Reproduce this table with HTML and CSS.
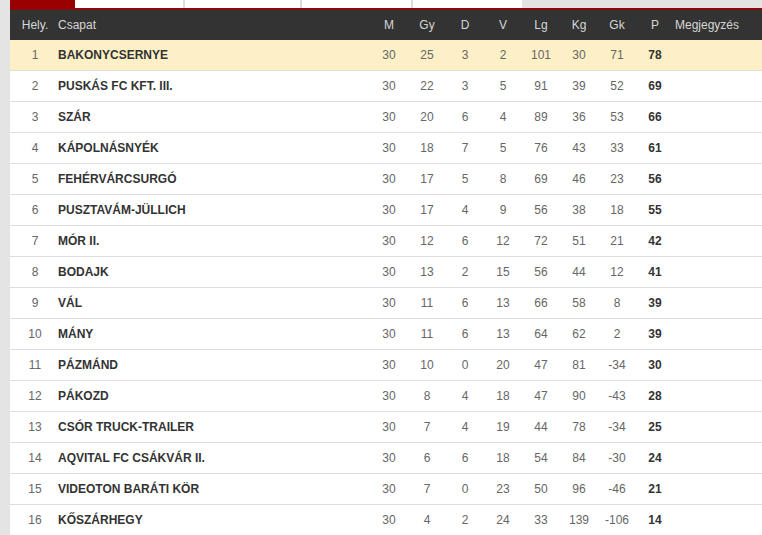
FILE: index.html
```html
<!DOCTYPE html>
<html lang="hu">
<head>
<meta charset="utf-8">
<title>Tabella</title>
<link rel="stylesheet" href="styles.css">
</head>
<body>
<div class="page">
  <div class="tabs">
    <div class="tab tab-active"></div>
    <div class="tab tab-w1"></div>
    <div class="tab tab-w2"></div>
    <div class="tab tab-w3"></div>
    <div class="tab tab-w4"></div>
    <div class="tab-rest"></div>
  </div>
  <table class="standings">
    <colgroup>
      <col class="c-pos"><col class="c-team">
      <col class="c-num"><col class="c-num"><col class="c-num"><col class="c-num">
      <col class="c-num"><col class="c-num"><col class="c-num"><col class="c-num">
      <col class="c-note">
    </colgroup>
    <thead>
      <tr>
        <th class="pos">Hely.</th><th class="team">Csapat</th>
        <th>M</th><th>Gy</th><th>D</th><th>V</th><th>Lg</th><th>Kg</th><th>Gk</th><th>P</th>
        <th class="note">Megjegyzés</th>
      </tr>
    </thead>
    <tbody>
      <tr class="leader"><td class="pos">1</td><td class="team">BAKONYCSERNYE</td><td>30</td><td>25</td><td>3</td><td>2</td><td>101</td><td>30</td><td>71</td><td class="pts">78</td><td class="note"></td></tr>
      <tr><td class="pos">2</td><td class="team">PUSKÁS FC KFT. III.</td><td>30</td><td>22</td><td>3</td><td>5</td><td>91</td><td>39</td><td>52</td><td class="pts">69</td><td class="note"></td></tr>
      <tr><td class="pos">3</td><td class="team">SZÁR</td><td>30</td><td>20</td><td>6</td><td>4</td><td>89</td><td>36</td><td>53</td><td class="pts">66</td><td class="note"></td></tr>
      <tr><td class="pos">4</td><td class="team">KÁPOLNÁSNYÉK</td><td>30</td><td>18</td><td>7</td><td>5</td><td>76</td><td>43</td><td>33</td><td class="pts">61</td><td class="note"></td></tr>
      <tr><td class="pos">5</td><td class="team">FEHÉRVÁRCSURGÓ</td><td>30</td><td>17</td><td>5</td><td>8</td><td>69</td><td>46</td><td>23</td><td class="pts">56</td><td class="note"></td></tr>
      <tr><td class="pos">6</td><td class="team">PUSZTAVÁM-JÜLLICH</td><td>30</td><td>17</td><td>4</td><td>9</td><td>56</td><td>38</td><td>18</td><td class="pts">55</td><td class="note"></td></tr>
      <tr><td class="pos">7</td><td class="team">MÓR II.</td><td>30</td><td>12</td><td>6</td><td>12</td><td>72</td><td>51</td><td>21</td><td class="pts">42</td><td class="note"></td></tr>
      <tr><td class="pos">8</td><td class="team">BODAJK</td><td>30</td><td>13</td><td>2</td><td>15</td><td>56</td><td>44</td><td>12</td><td class="pts">41</td><td class="note"></td></tr>
      <tr><td class="pos">9</td><td class="team">VÁL</td><td>30</td><td>11</td><td>6</td><td>13</td><td>66</td><td>58</td><td>8</td><td class="pts">39</td><td class="note"></td></tr>
      <tr><td class="pos">10</td><td class="team">MÁNY</td><td>30</td><td>11</td><td>6</td><td>13</td><td>64</td><td>62</td><td>2</td><td class="pts">39</td><td class="note"></td></tr>
      <tr><td class="pos">11</td><td class="team">PÁZMÁND</td><td>30</td><td>10</td><td>0</td><td>20</td><td>47</td><td>81</td><td>-34</td><td class="pts">30</td><td class="note"></td></tr>
      <tr><td class="pos">12</td><td class="team">PÁKOZD</td><td>30</td><td>8</td><td>4</td><td>18</td><td>47</td><td>90</td><td>-43</td><td class="pts">28</td><td class="note"></td></tr>
      <tr><td class="pos">13</td><td class="team">CSÓR TRUCK-TRAILER</td><td>30</td><td>7</td><td>4</td><td>19</td><td>44</td><td>78</td><td>-34</td><td class="pts">25</td><td class="note"></td></tr>
      <tr><td class="pos">14</td><td class="team">AQVITAL FC CSÁKVÁR II.</td><td>30</td><td>6</td><td>6</td><td>18</td><td>54</td><td>84</td><td>-30</td><td class="pts">24</td><td class="note"></td></tr>
      <tr><td class="pos">15</td><td class="team">VIDEOTON BARÁTI KÖR</td><td>30</td><td>7</td><td>0</td><td>23</td><td>50</td><td>96</td><td>-46</td><td class="pts">21</td><td class="note"></td></tr>
      <tr><td class="pos">16</td><td class="team">KŐSZÁRHEGY</td><td>30</td><td>4</td><td>2</td><td>24</td><td>33</td><td>139</td><td>-106</td><td class="pts">14</td><td class="note"></td></tr>
    </tbody>
  </table>
</div>
</body>
</html>
```

FILE: styles.css
```css
html, body {
  margin: 0;
  padding: 0;
}

body {
  background: #e4e4e4;
  font-family: "Liberation Sans", Arial, sans-serif;
  font-size: 12px;
  width: 762px;
  height: 535px;
  overflow: hidden;
}

.page {
  margin-left: 10px;
  width: 752px;
  background: #ffffff;
  min-height: 535px;
}

.tabs {
  display: flex;
  height: 8px;
  border-bottom: 2px solid #8a0a0a;
  background: #e4e4e4;
}

.tab {
  height: 8px;
  background: #ffffff;
}

.tab-active {
  width: 65px;
  background: #990000;
}

.tab-w1 {
  width: 108px;
  border-right: 2px solid #dcdcdc;
}

.tab-w2 {
  width: 115px;
  border-right: 2px solid #dcdcdc;
}

.tab-w3 {
  width: 109px;
  border-right: 2px solid #dcdcdc;
}

.tab-w4 {
  width: 109px;
}

.tab-rest {
  flex: 1;
}

.standings {
  border-collapse: collapse;
  table-layout: fixed;
  width: 752px;
}

.c-pos { width: 48px; }
.c-team { width: 312px; }
.c-num { width: 38px; }
.c-note { width: 88px; }

.standings th {
  background: #333333;
  color: #d6d6d6;
  font-weight: normal;
  height: 30px;
  padding: 0;
  text-align: center;
  white-space: nowrap;
}

.standings td {
  height: 30px;
  padding: 0;
  text-align: center;
  color: #666666;
  border-bottom: 1px solid #dddddd;
  white-space: nowrap;
}

.standings .pos {
  padding-left: 2px;
  text-align: center;
}

.standings .team {
  text-align: left;
}

.standings td.team {
  font-weight: bold;
  color: #333333;
}

.standings td.pts {
  font-weight: bold;
  color: #333333;
}

.standings .note {
  text-align: left;
  padding-left: 1px;
}

.standings tr.leader td {
  background: #fdf0c6;
}
```
